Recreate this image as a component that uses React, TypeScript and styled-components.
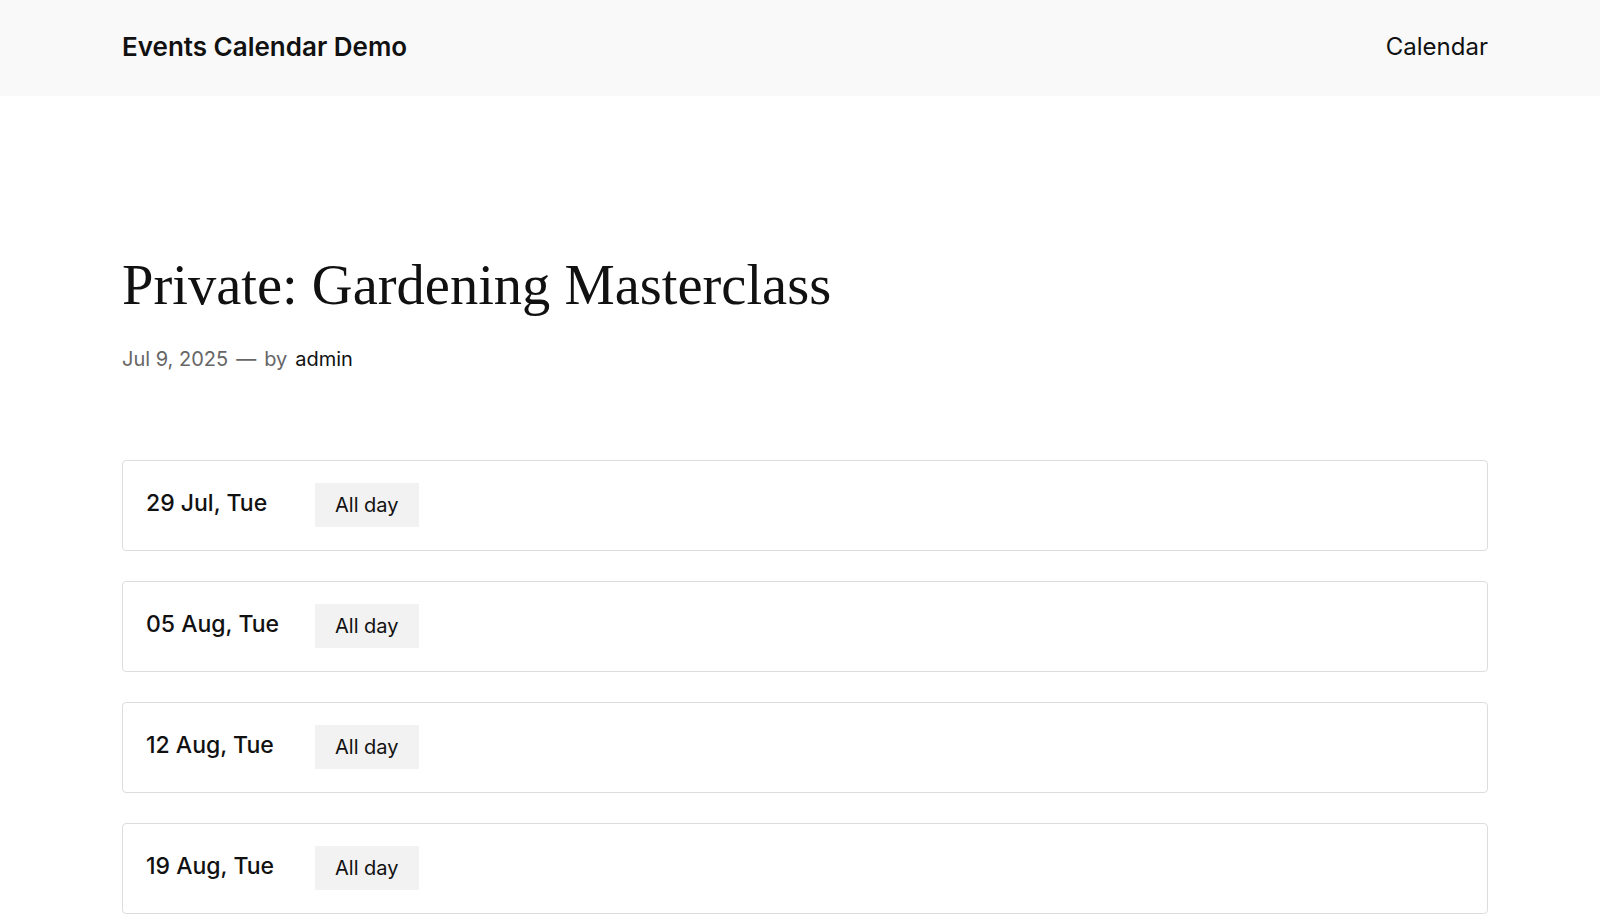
import React from 'react';
import styled, { createGlobalStyle } from 'styled-components';

const events = ['29 Jul, Tue', '05 Aug, Tue', '12 Aug, Tue', '19 Aug, Tue'];

const GlobalStyle = createGlobalStyle`
    body {
        margin: 0;
        background: #ffffff;
        color: #111111;
        font-family: Inter, "Noto Sans", sans-serif;
    }
`;

export default function App() {
    return (
        <>
            <GlobalStyle />
            <Header>
                <SiteTitle>Events Calendar Demo</SiteTitle>
                <NavLink>Calendar</NavLink>
            </Header>
            <Main>
                <Title>Private: Gardening Masterclass</Title>
                <Meta>
                    <span>Jul 9, 2025</span>
                    <span>—</span>
                    <span>by</span>
                    <Author>admin</Author>
                </Meta>
                <EventList>
                    {events.map((date) => (
                        <EventCard key={date}>
                            <EventDate>{date}</EventDate>
                            <Badge>All day</Badge>
                        </EventCard>
                    ))}
                </EventList>
            </Main>
        </>
    );
}

const Header = styled.header`
    height: 96px;
    box-sizing: border-box;
    padding: 0 112px 3px 122px;
    background-color: #f9f9f9;
    display: flex;
    align-items: center;
    justify-content: space-between;
`;

const SiteTitle = styled.a`
    font-size: 26px;
    font-weight: 600;
    color: #111111;
`;

const NavLink = styled.a`
    font-size: 24px;
    font-weight: 400;
    color: #111111;
`;

const Main = styled.main`
    padding: 156px 112px 0 122px;
`;

const Title = styled.h1`
    margin: 0;
    font-family: "Liberation Serif", serif;
    font-size: 56.5px;
    font-weight: 400;
    line-height: 1.2;
    color: #111111;
`;

const Meta = styled.div`
    margin-top: 27px;
    display: flex;
    gap: 8px;
    font-size: 20px;
    color: #666666;
`;

const Author = styled.span`
    color: #111111;
`;

const EventList = styled.div`
    margin-top: 89px;
    display: flex;
    flex-direction: column;
    gap: 30px;
`;

const EventCard = styled.div`
    height: 91px;
    box-sizing: border-box;
    padding: 0 23px;
    border: 1px solid #dddddd;
    border-radius: 4px;
    display: flex;
    align-items: center;
`;

const EventDate = styled.div`
    width: 169px;
    font-size: 23px;
    font-weight: 500;
    margin-top: -5px;
`;

const Badge = styled.span`
    height: 44px;
    box-sizing: border-box;
    padding: 0 20px;
    display: flex;
    align-items: center;
    background-color: #f2f2f2;
    font-size: 20px;
`;
